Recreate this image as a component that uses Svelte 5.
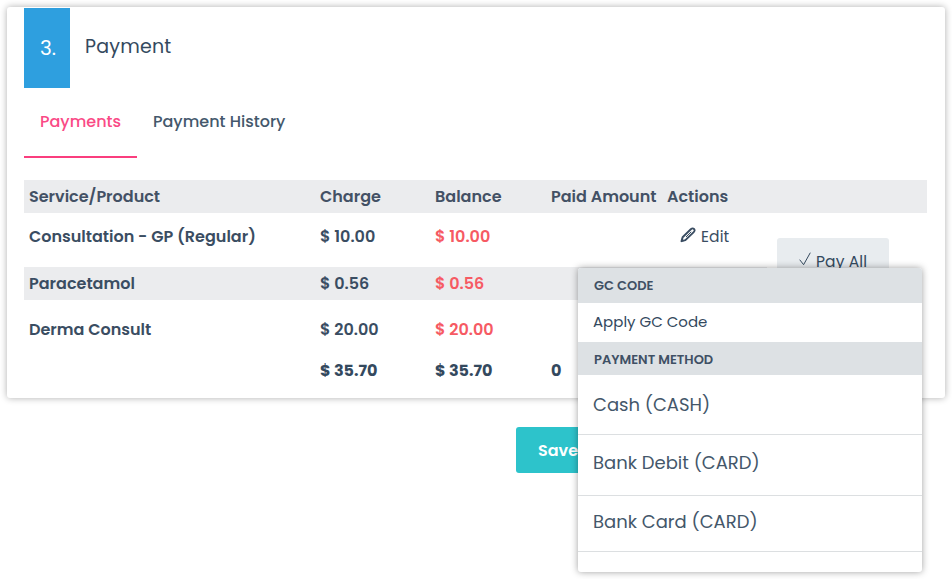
<script>
  const columns = ['Service/Product', 'Charge', 'Balance', 'Paid Amount', 'Actions'];
  const rows = [
    { name: 'Consultation - GP (Regular)', amount: '$ 10.00', kind: 'first', edit: true },
    { name: 'Paracetamol', amount: '$ 0.56', kind: 'striped' },
    { name: 'Derma Consult', amount: '$ 20.00', kind: 'third' }
  ];
  const methods = [
    { label: 'Cash (CASH)', kind: 'cash' },
    { label: 'Bank Debit (CARD)', kind: 'debit' },
    { label: 'Bank Card (CARD)', kind: 'credit' }
  ];
</script>

<main>
  <section class="card">
    <header>
      <span class="step">3.</span>
      <h1>Payment</h1>
    </header>
    <nav>
      <a class="tab active" href="#payments"><span>Payments</span></a>
      <a class="tab history" href="#history"><span>Payment History</span></a>
    </nav>
    <div class="row head">
      {#each columns as column}
        <span>{column}</span>
      {/each}
    </div>
    <div class="body">
      <div class="lines">
        {#each rows as row}
          <div class="row {row.kind}">
            <span class="name">{row.name}</span>
            <span>{row.amount}</span>
            <span class="due">{row.amount}</span>
            <span></span>
            {#if row.edit}
              <button class="edit">
                <svg width="16" height="16" viewBox="0 0 16 16" fill="none" stroke="currentColor" stroke-linejoin="round">
                  <path d="M1.5 14.2 2.6 10.3 10.8 2.3C12 1.2 13.1 1.1 14 2S14.8 4 13.7 5.1L5.4 13.1Z" stroke-width="1.9" />
                  <path d="M6 10 11.2 4.8" stroke-width="1" />
                  <path d="M1 14.8 1.8 11.4 4.5 14Z" fill="currentColor" stroke="none" />
                </svg>
                <span>Edit</span>
              </button>
            {/if}
          </div>
        {/each}
        <div class="row total">
          <span></span>
          <span>$ 35.70</span>
          <span>$ 35.70</span>
          <span>0</span>
        </div>
      </div>
      <button class="pay">
        <svg width="12" height="14" viewBox="0 0 12 14" fill="none" stroke="currentColor" stroke-width="1">
          <path d="M.7 7.7 4.6 12.7 11.3.7" />
        </svg>
        <span>Pay All</span>
      </button>
    </div>
  </section>
  <button class="save">Save</button>

  <div class="menu">
    <div class="group gc"><span>GC CODE</span></div>
    <div class="apply"><span>Apply GC Code</span></div>
    <div class="group method"><span>PAYMENT METHOD</span></div>
    {#each methods as method}
      <div class="option {method.kind}"><span>{method.label}</span></div>
    {/each}
  </div>
</main>

<style>
  :global(body) { margin: 0; background: #fff; }
  main {
    position: relative;
    box-sizing: border-box;
    width: 952px;
    height: 579px;
    padding: 7px;
    overflow: hidden;
    color: #34495e;
    font: 500 16px/24px Poppins, Inter, sans-serif;
  }
  button { border: 0; padding: 0; margin: 0; background: none; font: inherit; color: inherit; }
  svg { flex: none; display: block; }
  .card {
    box-sizing: border-box;
    width: 938px;
    height: 391px;
    padding: 1px 18px 0 17px;
    border-radius: 3px;
    background: #fff;
    box-shadow: 0 0 7px rgba(0, 0, 0, 0.32);
  }
  header { display: flex; height: 80px; }
  .step {
    width: 46px;
    text-align: center;
    background: #2e9fdf;
    color: #fff;
    font-size: 20px;
    font-weight: 400;
    line-height: 80px;
    text-indent: 2px;
  }
  h1 { margin: 0 0 0 15px; font-size: 19px; font-weight: 400; line-height: 77px; letter-spacing: 0.2px; }
  nav { display: flex; height: 70px; }
  .tab {
    box-sizing: border-box;
    height: 70px;
    padding: 22px 0 0 16px;
    color: #44586c;
    text-decoration: none;
    white-space: nowrap;
  }
  .active { width: 113px; border-bottom: 2px solid #fa3e7e; color: #fa4a86; }
  .row {
    box-sizing: border-box;
    display: grid;
    grid-template-columns: 291px 115px 116px 116px 1fr;
    align-items: center;
    height: 33px;
    padding-left: 5px;
    white-space: nowrap;
    font-weight: 600;
    color: #3a4d62;
  }
  .head { margin-top: 22px; background: #ebecee; color: #435165; }
  .body { display: flex; align-items: flex-start; }
  .lines { width: 743px; }
  .first { height: 48px; margin-bottom: 6px; }
  .striped { background: #ebecee; }
  .third { height: 60px; }
  .total { height: 24px; margin-top: -1px; font-weight: 700; color: #34495e; }
  .row .due { color: #f65a63; }
  .edit { display: flex; gap: 4px; margin-left: 14px; font-size: 15.5px; font-weight: 400; letter-spacing: 0.1px; }
  .edit svg { margin-top: 2px; margin-left: -1px; margin-right: 1px; }
  .pay {
    display: flex;
    gap: 5px;
    box-sizing: border-box;
    width: 112px;
    height: 46px;
    margin: 25px 0 0 10px;
    padding: 12px 0 0 22px;
    border-radius: 3px;
    background: #e8ecef;
    font-size: 15.5px;
    font-weight: 400;
    letter-spacing: 0.1px;
  }
  .pay svg { margin-top: 2px; }
  .save {
    display: block;
    width: 112px;
    height: 46px;
    margin: 29px 0 0 509px;
    padding: 1px 0 0 22px;
    border-radius: 3px;
    background: #2dc3cb;
    color: #fff;
    font-weight: 600;
    text-align: left;
  }
  .menu {
    position: absolute;
    left: 578px;
    top: 268px;
    width: 344px;
    height: 304px;
    border-radius: 3px;
    background: #fff;
    box-shadow: 0 0 7px rgba(0, 0, 0, 0.38);
    overflow: hidden;
  }
  .menu > div { box-sizing: border-box; display: flex; align-items: center; padding-left: 15px; }
  .menu .group { padding-left: 16px; background: #dde1e4; font-size: 13px; font-weight: 600; color: #3f5064; }
  .gc { height: 35px; }
  .menu .apply { height: 39px; padding-bottom: 2px; font-size: 15px; font-weight: 400; }
  .menu .method { height: 33px; padding-top: 2px; }
  .option { border-bottom: 1px solid #dcdfe1; font-size: 18px; font-weight: 400; color: #44576a; }
  .cash { height: 60px; }
  .menu .debit { height: 61px; padding-bottom: 4px; }
  .menu .credit { height: 56px; padding-bottom: 4px; }
</style>
